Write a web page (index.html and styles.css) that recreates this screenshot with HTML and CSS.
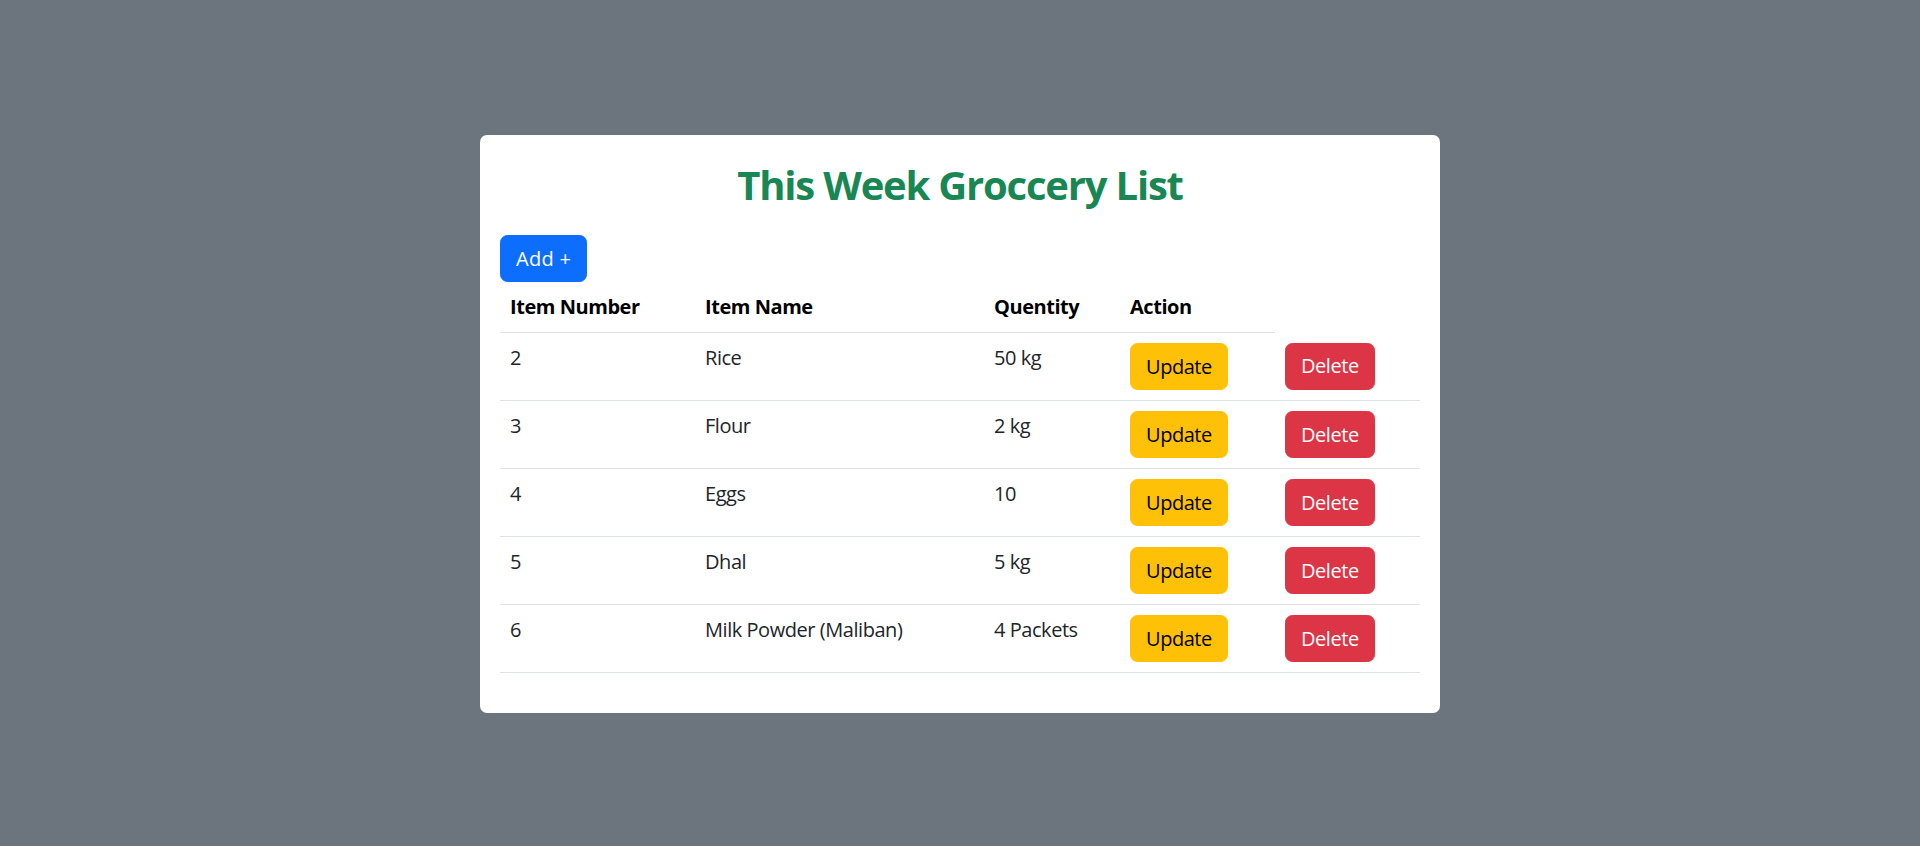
FILE: index.html
```html
<!DOCTYPE html>
<html lang="en">
<head>
<meta charset="utf-8">
<title>This Week Groccery List</title>
<link rel="stylesheet" href="styles.css">
</head>
<body>
  <main class="card">
    <h2 class="title">This Week Groccery List</h2>
    <div class="toolbar">
      <button class="btn btn-primary">Add +</button>
    </div>
    <table class="table">
      <colgroup>
        <col class="c1"><col class="c2"><col class="c3"><col class="c4"><col class="c5">
      </colgroup>
      <thead>
        <tr>
          <th>Item Number</th>
          <th>Item Name</th>
          <th>Quentity</th>
          <th>Action</th>
        </tr>
      </thead>
      <tbody>
        <tr>
          <td>2</td><td>Rice</td><td>50 kg</td>
          <td><button class="btn btn-warning">Update</button></td>
          <td><button class="btn btn-danger">Delete</button></td>
        </tr>
        <tr>
          <td>3</td><td>Flour</td><td>2 kg</td>
          <td><button class="btn btn-warning">Update</button></td>
          <td><button class="btn btn-danger">Delete</button></td>
        </tr>
        <tr>
          <td>4</td><td>Eggs</td><td>10</td>
          <td><button class="btn btn-warning">Update</button></td>
          <td><button class="btn btn-danger">Delete</button></td>
        </tr>
        <tr>
          <td>5</td><td>Dhal</td><td>5 kg</td>
          <td><button class="btn btn-warning">Update</button></td>
          <td><button class="btn btn-danger">Delete</button></td>
        </tr>
        <tr>
          <td>6</td><td>Milk Powder (Maliban)</td><td>4 Packets</td>
          <td><button class="btn btn-warning">Update</button></td>
          <td><button class="btn btn-danger">Delete</button></td>
        </tr>
      </tbody>
    </table>
  </main>
</body>
</html>
```

FILE: styles.css
```css
* { box-sizing: border-box; }

html, body {
  margin: 0;
  padding: 0;
}

body {
  min-height: 100vh;
  padding-top: 2px;
  background: #6c757d;
  display: flex;
  align-items: center;
  justify-content: center;
  font-family: "Segoe UI", "Open Sans", "Noto Sans", sans-serif;
  font-size: 20px;
  line-height: 30px;
  letter-spacing: -0.45px;
  color: #212529;
}

.card {
  width: 960px;
  background: #fff;
  border-radius: 7px;
  padding: 20px;
}

.title {
  margin: 6px 0 26px;
  text-align: center;
  font-size: 40px;
  line-height: 48px;
  font-weight: 700;
  letter-spacing: -1.2px;
  color: #198754;
}

.toolbar {
  display: flex;
}

.btn {
  font-family: inherit;
  font-size: 20px;
  line-height: 30px;
  letter-spacing: -0.45px;
  padding: 7.5px 15px;
  border: 1px solid transparent;
  border-radius: 7.5px;
  cursor: pointer;
  display: inline-block;
  vertical-align: top;
}

.btn-primary { background: #0d6efd; border-color: #0d6efd; color: #fff; letter-spacing: 0.3px; }
.btn-warning { background: #ffc107; border-color: #ffc107; color: #000; }
.btn-danger { background: #dc3545; border-color: #dc3545; color: #fff; }

.table {
  width: 100%;
  table-layout: fixed;
  border-collapse: collapse;
  margin-bottom: 20px;
  vertical-align: top;
}

.c1 { width: 195px; }
.c2 { width: 289px; }
.c3 { width: 136px; }
.c4 { width: 155px; }
.c5 { width: 145px; }

.table th,
.table td {
  padding: 10px;
  text-align: left;
  vertical-align: top;
  border-bottom: 1px solid #dee2e6;
}

.table th {
  font-weight: 700;
  color: #000;
}
```
